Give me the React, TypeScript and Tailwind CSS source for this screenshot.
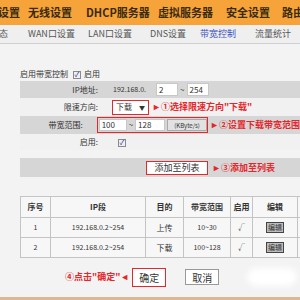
import React from 'react';

const RED = 'text-[#e5262b]';

const rows = [
  { id: 1, ip: '192.168.0.2~254', dir: '上传', range: '10~30' },
  { id: 2, ip: '192.168.0.2~254', dir: '下载', range: '100~128' },
];

function Check() {
  return (
    <span className="inline-flex w-[8px] h-[8px] border border-[#8a8a8a] bg-[#eef] items-center justify-center text-[7px] leading-none text-[#335]">✓</span>
  );
}

export default function App() {
  return (
    <div
      className="w-[300px] h-[300px] overflow-hidden bg-[#f3f3f3] flex flex-col"
      style={{ fontFamily: '"Noto Sans CJK SC", "Liberation Sans", sans-serif' }}
    >
      {/* Top nav */}
      <div className="h-[25px] shrink-0 bg-[#f6a43a] flex items-center text-[11px] font-bold text-[#3a2a10] whitespace-nowrap">
        <span className="ml-[-24px] w-[52px] shrink-0">网络设置</span>
        <span className="w-[58px] shrink-0">无线设置</span>
        <span className="w-[72px] shrink-0">DHCP服务器</span>
        <span className="w-[68px] shrink-0">虚拟服务器</span>
        <span className="w-[56px] shrink-0">安全设置</span>
        <span className="shrink-0">路由功能</span>
      </div>

      {/* Sub nav */}
      <div className="h-[19px] shrink-0 bg-[#efefef] border-b border-[#cfcfcf] flex items-center text-[9px] text-[#555] whitespace-nowrap">
        <span className="ml-[-28px] w-[56px] shrink-0">运行状态</span>
        <span className="w-[60px] shrink-0">WAN口设置</span>
        <span className="w-[62px] shrink-0">LAN口设置</span>
        <span className="w-[50px] shrink-0">DNS设置</span>
        <span className="w-[55px] shrink-0 text-[#3a4fc0]">带宽控制</span>
        <span className="shrink-0">流量统计</span>
      </div>

      <div className="flex flex-col pl-[20px] text-[8px] text-[#333]">
        {/* enable */}
        <div className="mt-[24px] h-[12px] flex items-center gap-[3px]">
          <span>启用带宽控制</span>
          <span className="ml-[2px]"><Check /></span>
          <span>启用</span>
        </div>

        {/* IP row */}
        <div className="mt-[1px] h-[17px] bg-[#d6d6d6] flex items-center">
          <span className="w-[78px] text-right">IP地址:</span>
          <span className="ml-[15px] text-[7px]">192.168.0.</span>
          <span className="ml-[10px] w-[22px] h-[13px] bg-white border border-[#c8c8c8] flex items-center pl-[2px]">2</span>
          <span className="mx-[2px]">~</span>
          <span className="w-[22px] h-[13px] bg-white border border-[#c8c8c8] flex items-center pl-[2px]">254</span>
        </div>

        {/* direction row */}
        <div className="h-[18px] bg-[#f1f1f1] flex items-center">
          <span className="w-[78px] text-right">限速方向:</span>
          <span className="ml-[14px] w-[37px] h-[15px] border-[1.5px] border-[#e5262b] flex items-center px-[3px] justify-between bg-white">
            <span>下载</span>
            <span className="text-[6px]">▼</span>
          </span>
          <span className={`ml-[3px] ${RED} font-bold text-[9px] whitespace-nowrap`}>►①选择限速方向"下载"</span>
        </div>

        {/* range row */}
        <div className="h-[18px] bg-[#d6d6d6] flex items-center whitespace-nowrap">
          <span className="w-[78px] text-right">带宽范围:</span>
          <span className="ml-[14px] w-[114px] h-[16px] border-[1.5px] border-[#e5262b] flex items-center gap-[2px] pl-[1px]">
            <span className="w-[28px] h-[12px] bg-white border border-[#c8c8c8] flex items-center pl-[2px]">100</span>
            <span>~</span>
            <span className="w-[30px] h-[12px] bg-white border border-[#c8c8c8] flex items-center pl-[2px]">128</span>
            <span className="w-[40px] h-[12px] bg-[#e2e2e2] border border-[#aaa] flex items-center justify-center text-[6px]">(KByte/s)</span>
          </span>
          <span className={`ml-[2px] ${RED} font-bold text-[9px]`}>►②设置下载带宽范围</span>
        </div>

        {/* enable row */}
        <div className="h-[16px] bg-[#f1f1f1] flex items-center">
          <span className="w-[78px] text-right">启用:</span>
          <span className="ml-[20px]"><Check /></span>
        </div>

        {/* add row */}
        <div className="mt-[8px] h-[19px] bg-[#d6d6d6] flex items-center whitespace-nowrap">
          <span className="ml-[126px] w-[62px] h-[14px] bg-white border-[1.5px] border-[#e5262b] flex items-center justify-center text-[9px]">添加至列表</span>
          <span className={`ml-[4px] ${RED} font-bold text-[9px]`}>►③添加至列表</span>
        </div>

        {/* table */}
        <table className="mt-[19px] border-collapse text-[7px] text-[#333] table-fixed w-[290px] bg-[#f7f7f7]">
          <colgroup>
            <col className="w-[30px]" />
            <col className="w-[95px]" />
            <col className="w-[38px]" />
            <col className="w-[47px]" />
            <col className="w-[22px]" />
            <col className="w-[45px]" />
            <col className="w-[13px]" />
          </colgroup>
          <thead>
            <tr className="h-[21px] font-bold text-[8px]">
              {['序号', 'IP段', '目的', '带宽范围', '启用', '编辑', ''].map((h, i) => (
                <th key={i} className="border border-[#c4c4c4] font-bold">{h}</th>
              ))}
            </tr>
          </thead>
          <tbody>
            {rows.map(r => (
              <tr key={r.id} className="h-[20px] text-center">
                <td className="border border-[#c4c4c4]">{r.id}</td>
                <td className="border border-[#c4c4c4]">{r.ip}</td>
                <td className="border border-[#c4c4c4] text-[8px]">{r.dir}</td>
                <td className="border border-[#c4c4c4]">{r.range}</td>
                <td className="border border-[#c4c4c4]">√</td>
                <td className="border border-[#c4c4c4]">
                  <span className="inline-block px-[1px] border border-[#444] bg-[#bdbdbd] text-[7px] leading-[9px]">编辑</span>
                </td>
                <td className="border border-[#c4c4c4]"></td>
              </tr>
            ))}
          </tbody>
        </table>

        {/* bottom actions */}
        <div className="mt-[9px] h-[20px] flex items-center whitespace-nowrap">
          <span className={`ml-[45px] ${RED} font-bold text-[9px]`}>④点击"确定"◄</span>
          <span className="ml-[3px] w-[34px] h-[19px] bg-white border-[1.5px] border-[#e5262b] flex items-center justify-center text-[10px]">确定</span>
          <span className="ml-[19px] w-[34px] h-[16px] bg-white border border-[#999] flex items-center justify-center text-[10px]">取消</span>
          <span className="ml-[28px] w-[50px] h-[18px] bg-white rounded-full blur-[3px]"></span>
        </div>
      </div>

      <div className="mt-auto h-[3px] bg-[#dcb791] shrink-0" />
    </div>
  );
}
